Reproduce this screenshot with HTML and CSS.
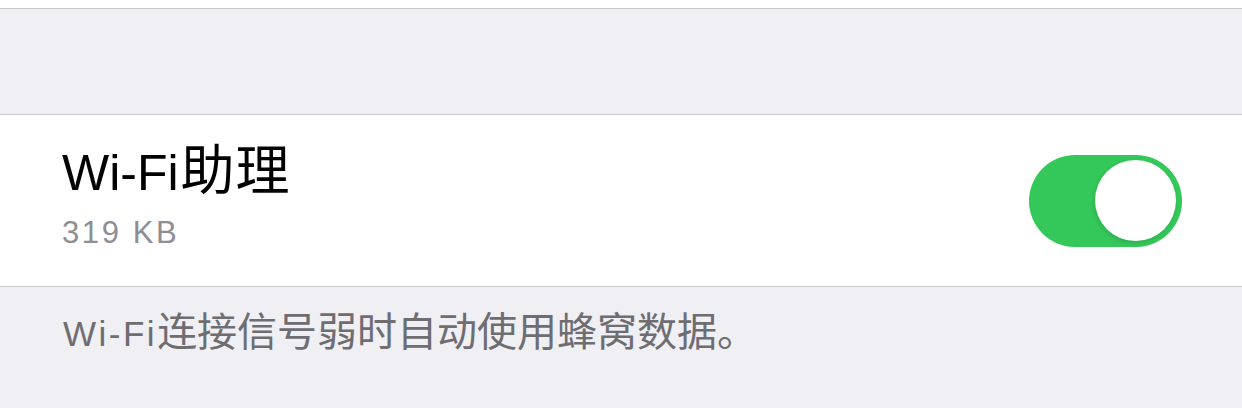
FILE: index.html
```html
<!DOCTYPE html>
<html>
<head>
    <title>Wi-Fi助理</title>
    <meta charset="UTF-8">
    <link rel="stylesheet" href="styles.css">
</head>
<body>
    <div class="top-strip"></div>

    <!-- 分组间距 -->
    <div class="group-gap"></div>

    <div class="cell">
        <div class="cell-text">
            <div class="cell-title"><span class="latin">Wi-Fi</span><span class="cjk">助理</span></div>
            <div class="cell-sub">319 KB</div>
        </div>
        <div class="switch on">
            <div class="knob"></div>
        </div>
    </div>

    <div class="footer"><span class="latin">Wi-Fi</span><span class="cjk">连接信号弱时自动使用蜂窝数据。</span></div>
</body>
</html>
```

FILE: styles.css
```css
body {
    margin: 0;
    padding: 0;
    background: #efeff4;
    font-family: "Liberation Sans", "Noto Sans CJK SC", sans-serif;
    overflow: hidden;
}

.top-strip {
    height: 8px;
    background: #fff;
    border-bottom: 1px solid #c8c7cc;
}

.group-gap {
    height: 105px;
    border-bottom: 1px solid #c8c7cc;
}

.cell {
    display: flex;
    align-items: center;
    justify-content: space-between;
    height: 172px;
    box-sizing: border-box;
    padding: 0 60px 0 62px;
    background: #fff;
    border-bottom: 1px solid #c8c7cc;
}

.cell-text {
    display: flex;
    flex-direction: column;
    gap: 12px;
    margin-bottom: 10px;
}

.cell-title {
    font-size: 50px;
    line-height: 60px;
    color: #000;
}

.cell-title .cjk {
    margin-left: 2px;
    font-size: 54px;
    letter-spacing: 1px;
}

.cell-sub {
    font-size: 31px;
    line-height: 36px;
    letter-spacing: 2.6px;
    color: #8e8e93;
}

.switch {
    width: 153px;
    height: 92px;
    border-radius: 46px;
    background: #34c759;
    box-sizing: border-box;
    padding: 6px;
    display: flex;
    justify-content: flex-end;
    align-items: center;
}

.knob {
    width: 81px;
    height: 81px;
    border-radius: 50%;
    background: #fff;
    box-shadow: -1px 2px 4px rgba(0, 0, 0, 0.12);
}

.footer {
    padding: 23px 0 0 63px;
    font-size: 35px;
    line-height: 44px;
    color: #6d6d72;
}

.footer .latin {
    letter-spacing: 2.5px;
}

.footer .cjk {
    font-size: 40px;
}
```
